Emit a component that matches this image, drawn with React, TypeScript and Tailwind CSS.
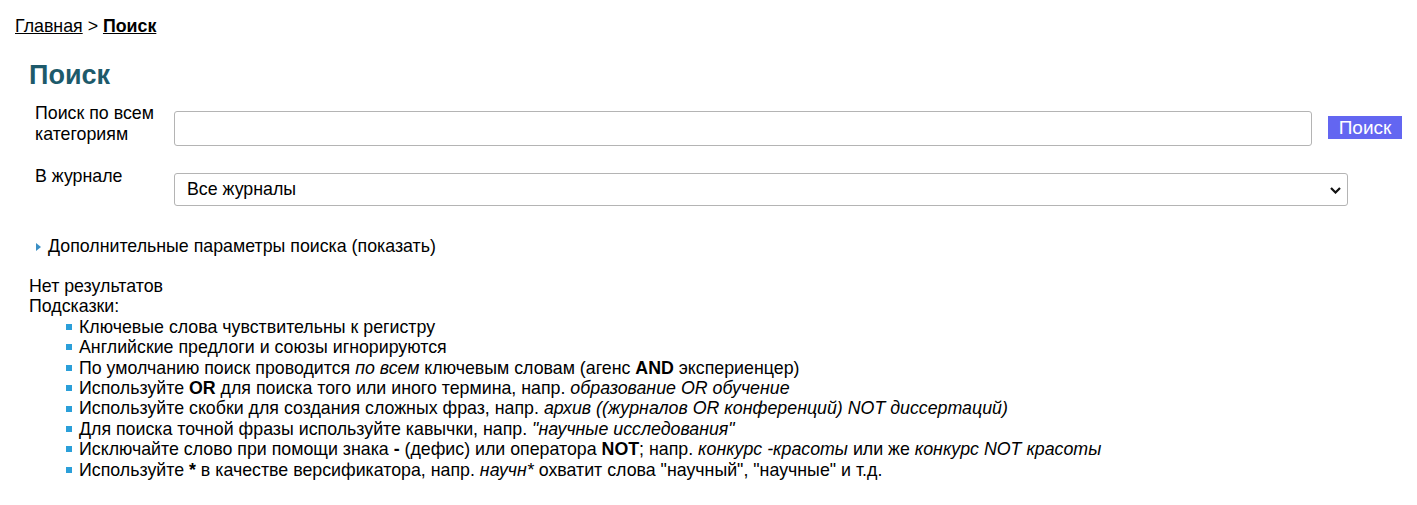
const tips: React.ReactNode[] = [
  <>Ключевые слова чувствительны к регистру</>,
  <>Английские предлоги и союзы игнорируются</>,
  <>
    По умолчанию поиск проводится <i>по всем</i> ключевым словам (агенс <b>AND</b> экспериенцер)
  </>,
  <>
    Используйте <b>OR</b> для поиска того или иного термина, напр. <i>образование OR обучение</i>
  </>,
  <>
    Используйте скобки для создания сложных фраз, напр.{' '}
    <i>архив ((журналов OR конференций) NOT диссертаций)</i>
  </>,
  <>
    Для поиска точной фразы используйте кавычки, напр. <i>"научные исследования"</i>
  </>,
  <>
    Исключайте слово при помощи знака <b>-</b> (дефис) или оператора <b>NOT</b>; напр.{' '}
    <i>конкурс -красоты</i> или же <i>конкурс NOT красоты</i>
  </>,
  <>
    Используйте <b>*</b> в качестве версификатора, напр. <i>научн*</i> охватит слова "научный",
    "научные" и т.д.
  </>,
]

export default function App() {
  return (
    <div className="min-h-[505px] bg-white text-black font-['Liberation_Sans',Arial,sans-serif] text-[17.8px] leading-[21px]">
      <div className="pl-[15px] pt-[16px]">
        <a className="underline">Главная</a> &gt; <a className="underline font-bold">Поиск</a>
      </div>

      <div className="pl-[29px] pr-[15px]">
        <h1 className="mt-[23px] text-[27px] leading-[31px] font-bold text-[#1d5a6b]">Поиск</h1>

        <div className="mt-[12px] flex items-start">
          <label className="w-[145px] pl-[6px] leading-[21px]">Поиск по всем категориям</label>
          <input
            type="text"
            className="mt-[8px] h-[35px] w-[1139px] rounded-[3px] border border-[#b4b4b4] bg-white px-2 outline-none"
          />
          <button className="ml-[16px] mt-[13px] h-[23px] w-[74px] bg-[#6366f1] text-[19px] leading-[23px] text-white">
            Поиск
          </button>
        </div>

        <div className="mt-[20px] flex items-start">
          <label className="w-[145px] pl-[6px] leading-[21px]">В журнале</label>
          <div className="relative mt-[7px] h-[33px] w-[1174px] rounded-[3px] border border-[#b4b4b4] bg-white">
            <span className="absolute left-[12px] top-[5px]">Все журналы</span>
            <svg
              className="absolute right-[6px] top-[13px]"
              width="11"
              height="7"
              viewBox="0 0 11 7"
              fill="none"
              stroke="#111"
              strokeWidth="2.2"
            >
              <polyline points="1,1 5.5,5.5 10,1" />
            </svg>
          </div>
        </div>

        <div className="mt-[30px] flex items-center">
          <span className="ml-[7px] mr-[7px] inline-block h-0 w-0 border-y-[4px] border-l-[5px] border-y-transparent border-l-[#3b8fc4]" />
          <span>Дополнительные параметры поиска (показать)</span>
        </div>

        <div className="mt-[19px] leading-[20.4px]">
          <div>Нет результатов</div>
          <div>Подсказки:</div>
          <ul className="pl-[37px]">
            {tips.map((t, i) => (
              <li key={i} className="flex items-center">
                <span className="mr-[7px] inline-block h-[6px] w-[6px] shrink-0 bg-[#2b9fd9]" />
                <span>{t}</span>
              </li>
            ))}
          </ul>
        </div>
      </div>
    </div>
  )
}
